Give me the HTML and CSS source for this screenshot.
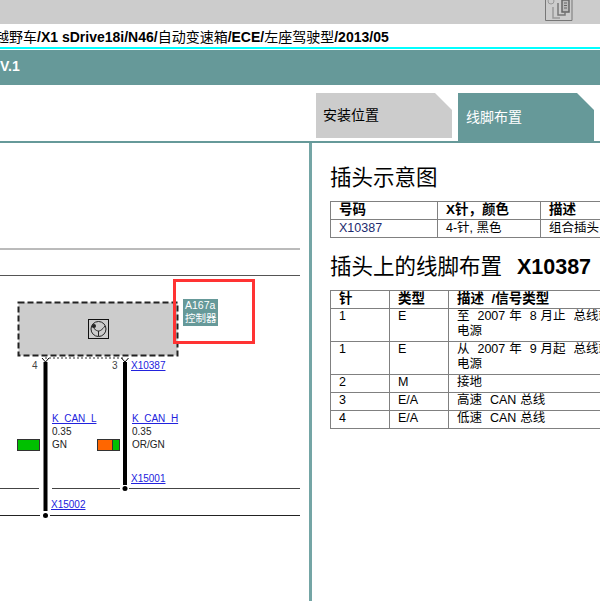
FILE: index.html
```html
<!DOCTYPE html>
<html>
<head>
<title>线脚布置</title>
<link rel="stylesheet" href="styles.css">
</head>
<body>

<div class="toolbar">
  <svg class="tool-icon" width="28" height="21" viewBox="0 0 28 21">
    <path d="M0.500 0V20.500H27V0" fill="none" stroke="#777"/>
    <path d="M17 0H24V12H17Z" fill="#bbb" stroke="#666" stroke-width="1.500"/>
    <path d="M19 3H22M19 5.500H22M19 8H22" stroke="#666"/>
    <path d="M13 3V15H20V12" fill="none" stroke="#777" stroke-width="1.500"/>
    <path d="M8 7V18H15" fill="none" stroke="#999" stroke-width="1.500"/>
    <circle cx="6" cy="1" r="3" fill="none" stroke="#999"/>
  </svg>
</div>
<div class="path"><span>越野车</span>/X1 sDrive18i/N46/<span>自动变速箱</span>/ECE/<span>左座驾驶型</span>/2013/05</div>
<div class="title">V.1</div>

<div class="tabs">
  <div class="tab">安装位置</div>
  <div class="tab active">线脚布置</div>
</div>

<div class="main">
  <div class="left">
    <svg class="diagram" width="309" height="458" viewBox="0 143 309 458">
      <path d="M0 249H300" stroke="#777" fill="none"/>
      <path d="M0 275.500H300" stroke="#555" fill="none"/>

      <rect x="18.500" y="302.500" width="159" height="53" fill="#ccc" stroke="#222" stroke-width="2" stroke-dasharray="6 3"/>
      <rect x="88.500" y="319.500" width="20" height="19" fill="#ccc" stroke="#111"/>
      <circle cx="98.500" cy="329" r="7.500" fill="none" stroke="#222"/>
      <path d="M92 326C95 330 97 331 98.500 331C100 331 102 330 105 326M98.500 331V336" fill="none" stroke="#222"/>
      <circle cx="94" cy="326" r="2" fill="#222"/>

      <path d="M45 358H125" stroke="#333" stroke-dasharray="2 2" fill="none"/>
      <path d="M45.500 362V511M125 362V485" stroke="#000" stroke-width="4" fill="none"/>
      <path d="M42 358L45.500 362L49 358M121.500 358L125 362L128.500 358" stroke="#000" fill="none"/>

      <path d="M0 488.500H39M52 488.500H120M129 488.500H300" stroke="#444" fill="none"/>
      <path d="M0 515.500H40M50 515.500H300" stroke="#222" fill="none"/>
      <circle cx="125" cy="488.500" r="2.500" fill="#000"/>
      <circle cx="45.500" cy="515.500" r="2.500" fill="#000"/>

      <rect x="17.500" y="439.500" width="22" height="11" fill="#00c000" stroke="#333"/>
      <rect x="97.500" y="439.500" width="15" height="11" fill="#ff6600" stroke="#333"/>
      <rect x="112.500" y="439.500" width="7" height="11" fill="#00c000" stroke="#333"/>

      <text class="pin" x="32" y="369">4</text>
      <text class="pin" x="112" y="369">3</text>
      <text class="link" x="131" y="369">X10387</text>
      <text class="link" x="52" y="422">K_CAN_L</text>
      <text class="link" x="132" y="422">K_CAN_H</text>
      <text class="wire" x="52" y="435">0.35</text>
      <text class="wire" x="132" y="435">0.35</text>
      <text class="wire" x="52" y="448">GN</text>
      <text class="wire" x="132" y="448">OR/GN</text>
      <text class="link" x="131" y="482">X15001</text>
      <text class="link" x="51" y="508">X15002</text>

      <rect x="183" y="299" width="35" height="27" fill="#669999"/>
      <text class="part" x="185" y="309">A167a</text>
      <text class="part" x="185" y="321.500">控制器</text>
      <rect x="174.500" y="280.500" width="79" height="62" fill="none" stroke="#f33" stroke-width="3"/>
    </svg>
  </div>

  <div class="right">
    <h2>插头示意图</h2>
    <table class="plug">
      <tr><th class="c1">号码</th><th class="c2">X针，颜色</th><th>描述</th></tr>
      <tr><td class="num">X10387</td><td>4-针, 黑色</td><td>组合插头</td></tr>
    </table>
    <h2 class="second">插头上的线脚布置 &nbsp;<b>X10387</b></h2>
    <table class="pins">
      <tr><th class="c1">针</th><th class="c2">类型</th><th>描述 &nbsp;/信号类型</th></tr>
      <tr><td>1</td><td>E</td><td>至 &nbsp;2007 年 &nbsp;8 月止 &nbsp;总线端 30B<br>电源</td></tr>
      <tr><td>1</td><td>E</td><td>从 &nbsp;2007 年 &nbsp;9 月起 &nbsp;总线端 30B<br>电源</td></tr>
      <tr><td>2</td><td>M</td><td>接地</td></tr>
      <tr><td>3</td><td>E/A</td><td>高速 &nbsp;CAN 总线</td></tr>
      <tr><td>4</td><td>E/A</td><td>低速 &nbsp;CAN 总线</td></tr>
    </table>
  </div>
</div>

</body>
</html>
```

FILE: styles.css
```css
html, body { margin: 0; padding: 0; }
body { width: 600px; height: 601px; overflow: hidden; background: #fff; color: #000; font-family: "Liberation Sans", "Noto Sans CJK SC", sans-serif; }

.toolbar { height: 24px; background: #ccc; position: relative; }
.tool-icon { position: absolute; left: 545px; top: 0; }

.path { height: 23px; line-height: 26px; margin-left: -5px; font-size: 14px; font-weight: bold; white-space: nowrap; }
.path span { font-weight: normal; }

.title { height: 35px; margin-top: 3px; background: #669999; color: #fff; font-size: 14px; font-weight: bold; line-height: 33px; position: relative; }
.title::before { content: ""; position: absolute; left: 0; right: 0; top: -3px; height: 2px; background: #00ffff; }

.tabs { display: flex; gap: 6px; height: 56px; padding: 8px 0 0 316px; box-sizing: border-box; }
.tab { width: 136px; height: 45px; background: #ccc; font-size: 14px; line-height: 44px; text-indent: 7px; clip-path: polygon(0 0, 119px 0, 100% 17px, 100% 100%, 0 100%); }
.tab.active { height: 48px; line-height: 48px; background: #669999; color: #fff; text-indent: 8px; }

.main { display: flex; height: 460px; border-top: 2px solid #669999; }
.left { width: 309px; flex: none; }
.diagram { display: block; }
.diagram text { font-family: "Liberation Sans", "Noto Sans CJK SC", sans-serif; font-size: 10px; }
.diagram .pin { fill: #444; }
.diagram .link { fill: #2222dd; text-decoration: underline; }
.diagram .wire { fill: #222; }
.diagram .part { fill: #fff; font-size: 10.5px; }

.right { flex: 1; min-width: 0; overflow: hidden; border-left: 3px solid #74a5a5; padding: 22px 0 0 18px; }
h2 { margin: 0; font-size: 21.5px; font-weight: normal; line-height: 26px; white-space: nowrap; word-spacing: 1.5px; }
h2 b { font-weight: bold; }
h2.second { margin-top: 16px; }

table { table-layout: fixed; width: 420px; border-collapse: collapse; font-size: 12.5px; line-height: 15px; }
th, td { border: 1px solid #808080; padding: 1px 8px; text-align: left; vertical-align: top; white-space: nowrap; overflow: hidden; }
th { padding-top: 0; padding-bottom: 2px; font-size: 13.5px; font-weight: bold; }
.plug { margin-top: 10px; }
.plug .c1 { width: 90px; }
.plug .c2 { width: 86px; }
.plug .num { color: #1c2a6e; }
.pins { margin-top: 10px; }
.pins td { padding: 0 8px 2px; word-spacing: 0.5px; }
.pins .c1 { width: 42px; }
.pins .c2 { width: 42px; }
```
